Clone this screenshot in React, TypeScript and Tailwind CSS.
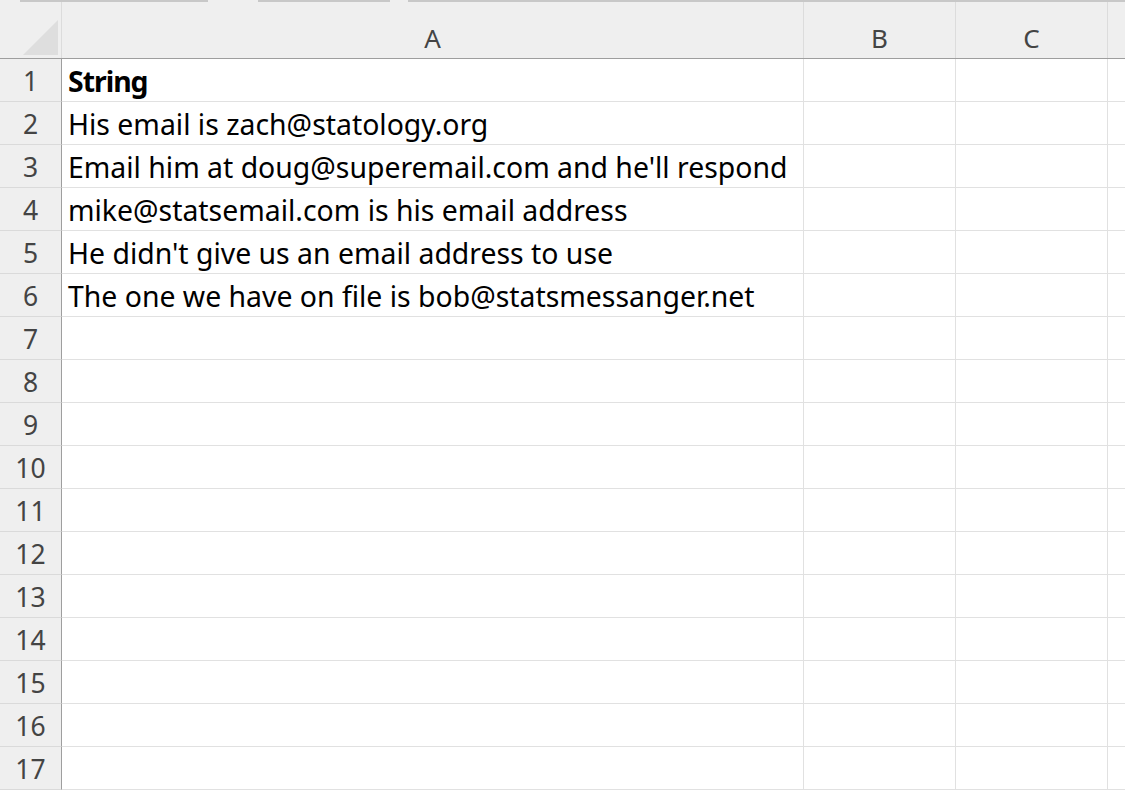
const rows: string[] = [
  "String",
  "His email is zach@statology.org",
  "Email him at doug@superemail.com and he'll respond",
  "mike@statsemail.com is his email address",
  "He didn't give us an email address to use",
  "The one we have on file is bob@statsmessanger.net",
  "", "", "", "", "", "", "", "", "", "", "",
];

const font = { fontFamily: "'Noto Sans', 'Open Sans', sans-serif" };

export default function App() {
  return (
    <div className="relative h-[801px] w-[1125px] overflow-hidden bg-white" style={font}>
      {/* faint tab shadow strip at top */}
      <div className="flex h-[2px] bg-[#efefef]">
        <div className="ml-[20px] w-[188px] bg-[#c8c8c8]" />
        <div className="ml-[50px] w-[132px] bg-[#c8c8c8]" />
        <div className="ml-[18px] flex-1 bg-[#c8c8c8]" />
      </div>

      {/* column headers */}
      <div className="flex h-[57px] border-b border-[#9e9e9e] bg-[#efefef] text-[26px] text-[#444]">
        <div className="relative w-[62px] shrink-0 border-r border-[#dcdcdc]">
          <svg className="absolute left-[23px] top-[18px]" width="36" height="36" viewBox="0 0 36 36">
            <polygon points="35,0 35,35 0,35" fill="#dedede" />
          </svg>
        </div>
        {[
          ["A", "w-[742px]"],
          ["B", "w-[152px]"],
          ["C", "w-[152px]"],
        ].map(([l, w]) => (
          <div key={l} className={`${w} flex shrink-0 items-center justify-center border-r border-[#dcdcdc] pt-[16px]`}>
            {l}
          </div>
        ))}
        <div className="flex-1" />
      </div>

      {/* body */}
      {rows.map((t, i) => (
        <div key={i} className="flex h-[43px]">
          <div className="flex w-[62px] shrink-0 items-center justify-center border-r border-b border-r-[#9e9e9e] border-b-[#dadada] bg-[#efefef] pt-[3px] text-[26.5px] text-[#444]">
            {i + 1}
          </div>
          <div
            className={`flex w-[742px] shrink-0 items-center whitespace-nowrap border-r border-b border-[#e1e1e1] pl-[6px] pt-[3px] text-[28.4px] text-black ${
              i === 0 ? "font-bold tracking-[-1px]" : ""
            }`}
          >
            {t}
          </div>
          <div className="w-[152px] shrink-0 border-r border-b border-[#e1e1e1]" />
          <div className="w-[152px] shrink-0 border-r border-b border-[#e1e1e1]" />
          <div className="flex-1 border-b border-[#e1e1e1]" />
        </div>
      ))}
    </div>
  );
}
